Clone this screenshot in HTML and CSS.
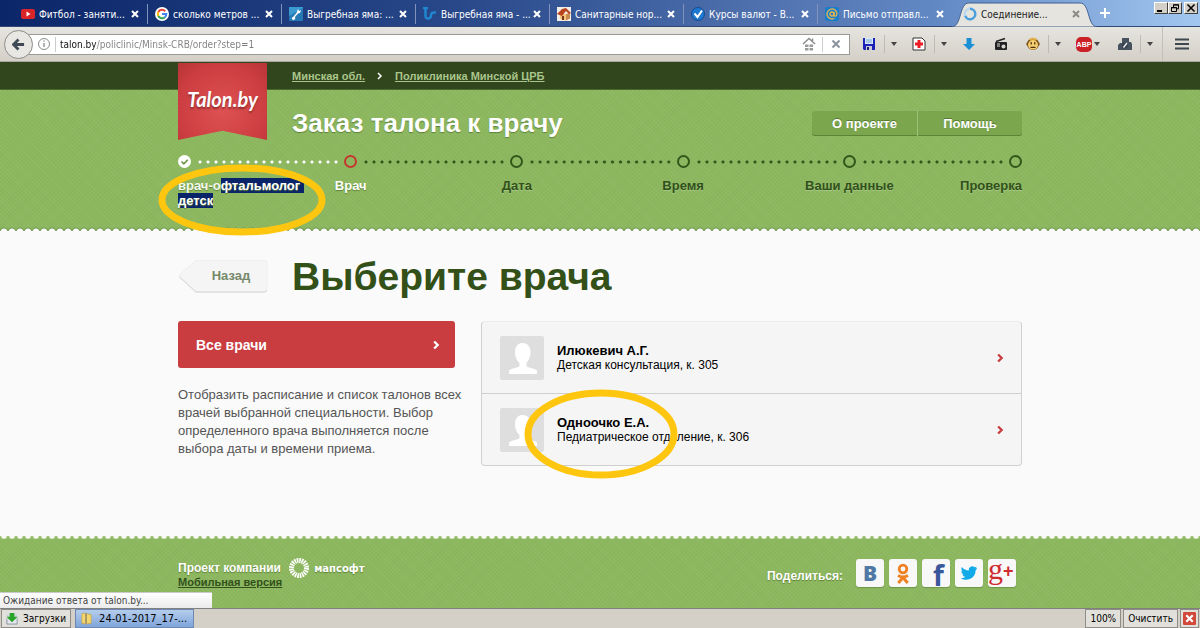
FILE: index.html
```html
<!DOCTYPE html>
<html lang="ru">
<head>
<meta charset="utf-8">
<meta name="viewport" content="width=device-width, initial-scale=1">
<title>Заказ талона к врачу</title>
<link rel="stylesheet" href="styles.css">
</head>
<body>
<div class="browser">
  <nav class="tabs" aria-label="Вкладки">
    <div class="tab">
      <svg class="fav" viewBox="0 0 14 14"><rect x="0" y="2" width="14" height="10" rx="2" fill="#d9252a"/><path d="M5.500 4.500l4 2.500-4 2.500z" fill="#fff"/></svg>
      <span class="tab-name">Фитбол - заняти...</span><button class="tab-close" aria-label="Закрыть"><svg viewBox="0 0 8 8"><path d="M1 1l6 6M7 1L1 7"/></svg></button>
    </div>
    <div class="tab">
      <svg class="fav" viewBox="0 0 14 14"><circle cx="7" cy="7" r="7" fill="#fff"/><g fill="none" stroke-width="2"><path d="M10.200 4.200A4.300 4.300 0 0 0 3.300 5" stroke="#ea4335"/><path d="M3.300 5a4.300 4.300 0 0 0 0 4" stroke="#fbbc05"/><path d="M3.300 9a4.300 4.300 0 0 0 6.400 1.400" stroke="#34a853"/><path d="M9.700 10.400A4.300 4.300 0 0 0 11.300 7H7" stroke="#4285f4"/></g></svg>
      <span class="tab-name">сколько метров ...</span><button class="tab-close" aria-label="Закрыть"><svg viewBox="0 0 8 8"><path d="M1 1l6 6M7 1L1 7"/></svg></button>
    </div>
    <div class="tab">
      <svg class="fav" viewBox="0 0 14 14"><rect width="14" height="14" rx="1" fill="#2479b5"/><path d="M0 9L14 1v-1H0z" fill="#3a9ad0"/><path d="M9 2l1 2 2-1-1 3-2 .5-3 3.500.3 2-2.300 1.200L2.500 11 4 10l3.500-4z" fill="#fff"/></svg>
      <span class="tab-name">Выгребная яма: ...</span><button class="tab-close" aria-label="Закрыть"><svg viewBox="0 0 8 8"><path d="M1 1l6 6M7 1L1 7"/></svg></button>
    </div>
    <div class="tab">
      <svg class="fav" viewBox="0 0 14 14"><path d="M0 1h5M2.500 1v8q0 3 3 2.500T8 8q0-3 5-2.500" fill="none" stroke="#1f86cf" stroke-width="2.500"/></svg>
      <span class="tab-name">Выгребная яма - ...</span><button class="tab-close" aria-label="Закрыть"><svg viewBox="0 0 8 8"><path d="M1 1l6 6M7 1L1 7"/></svg></button>
    </div>
    <div class="tab">
      <svg class="fav" viewBox="0 0 14 14"><rect width="14" height="14" fill="#f4efe6"/><path d="M3 7v5l6 1.500V7z" fill="#f4c67c"/><path d="M9 7v6.500l4-2V6z" fill="#c98a4d"/><path d="M0 7l5-5 4-1 5 5-2 1-3-3-4 5z" fill="#b8451f"/><path d="M5 9h2v4H5z" fill="#7a3218"/></svg>
      <span class="tab-name">Санитарные нор...</span><button class="tab-close" aria-label="Закрыть"><svg viewBox="0 0 8 8"><path d="M1 1l6 6M7 1L1 7"/></svg></button>
    </div>
    <div class="tab">
      <svg class="fav" viewBox="0 0 14 14"><circle cx="7" cy="7" r="6.500" fill="#1f78cf" stroke="#124d92"/><path d="M3.500 6.500L6.500 10 11 3.500" fill="none" stroke="#fff" stroke-width="2"/></svg>
      <span class="tab-name">Курсы валют - В...</span><button class="tab-close" aria-label="Закрыть"><svg viewBox="0 0 8 8"><path d="M1 1l6 6M7 1L1 7"/></svg></button>
    </div>
    <div class="tab tab-last">
      <svg class="fav" viewBox="0 0 14 14"><rect width="14" height="14" rx="2" fill="#1b7ecb"/><circle cx="7" cy="7" r="2" fill="none" stroke="#e8b64a" stroke-width="1.300"/><path d="M9 5v3q0 1.300 1.300 1.200T12 7a5 5 0 1 0-2.500 4.300" fill="none" stroke="#e8b64a" stroke-width="1.300"/></svg>
      <span class="tab-name">Письмо отправл...</span><button class="tab-close" aria-label="Закрыть"><svg viewBox="0 0 8 8"><path d="M1 1l6 6M7 1L1 7"/></svg></button>
    </div>
    <div class="tab tab-active">
      <svg class="tab-shape" viewBox="0 0 146 26" preserveAspectRatio="none"><path d="M0 26C10 25 7 2 17 2H129C139 2 136 25 146 26z" fill="#e6e4df" stroke="#3f5f92" stroke-width="1"/></svg>
      <svg class="fav" viewBox="0 0 14 14"><circle cx="7" cy="7" r="5.200" fill="none" stroke="#b9d7ee" stroke-width="2.400"/><path d="M7 1.800a5.200 5.200 0 1 1-4.800 7" fill="none" stroke="#4d9fdc" stroke-width="2.400"/></svg>
      <span class="tab-name">Соединение...</span><button class="tab-close" aria-label="Закрыть"><svg viewBox="0 0 8 8"><path d="M1 1l6 6M7 1L1 7"/></svg></button>
    </div>
    <button class="tab-new" aria-label="Новая вкладка"><svg viewBox="0 0 10 10"><path d="M5 0v10M0 5h10" stroke="#fff" stroke-width="2"/></svg></button>
    <div class="window-buttons">
      <button aria-label="Свернуть"><svg viewBox="0 0 10 8"><path d="M1 7h5" stroke="#000" stroke-width="2"/></svg></button>
      <button aria-label="Развернуть"><svg viewBox="0 0 10 8"><path d="M3.500 3V.8h5v4H7M1.500 3.500h5v4h-5zM1 3.800h6M3 1h6" fill="none" stroke="#000"/></svg></button>
      <button class="window-close" aria-label="Закрыть окно"><svg viewBox="0 0 10 8"><path d="M1.500 .5l7 7M8.500 .5l-7 7" stroke="#000" stroke-width="1.500"/></svg></button>
    </div>
  </nav>

  <div class="toolbar">
    <button class="back" aria-label="Назад на страницу"><svg viewBox="0 0 14 14"><path d="M7 1.500L1.500 7 7 12.500M2 7h11" fill="none" stroke="#3f4a56" stroke-width="3"/></svg></button>
    <div class="address">
      <svg class="info" viewBox="0 0 14 14"><circle cx="7" cy="7" r="5.500" fill="none" stroke="#8a8a8a"/><path d="M7 6v4M7 3.500v1.300" stroke="#8a8a8a" stroke-width="1.300"/></svg>
      <input class="url" type="text" aria-label="Адрес" value="talon.by/policlinic/Minsk-CRB/order?step=1">
      <button class="in-field" aria-label="Домой"><svg viewBox="0 0 14 14"><path d="M1 7l6-5.500L13 7M10.500 4V1.500" fill="none" stroke="#8d8d8d" stroke-width="1.500"/><path d="M3 7.500h3.500V10H3zM7.500 7.500H11V10H7.500zM3 11h3.500v2.500H3zM7.500 11H11v2.500H7.500z" fill="#9a9a9a"/></svg></button>
      <button class="in-field stop" aria-label="Остановить"><svg viewBox="0 0 14 14"><path d="M3.500 3.500l7 7M10.500 3.500l-7 7" stroke="#8a939c" stroke-width="2"/></svg></button>
    </div>
    <div class="tools">
      <div class="tool-group"><button class="tool" aria-label="Сохранить"><svg viewBox="0 0 14 14"><path d="M1 1h12v12H2l-1-1z" fill="#1a22b8"/><path d="M3 1h8v6H3z" fill="#d5e9fb"/><path d="M4 3h6M4 5h6" stroke="#7aa2cf"/><path d="M4 9h6v4H4z" fill="#c9ccd8"/><path d="M5 10h2v3H5z" fill="#1a1f70"/></svg></button><button class="caret" aria-label="Ещё"></button></div>
      <div class="tool-group"><button class="tool" aria-label="Добавить"><svg viewBox="0 0 14 14"><path d="M1 1h9l3 3v9H1z" fill="#fff" stroke="#333"/><path d="M7 3v8M3 7h8" stroke="#ec1c24" stroke-width="3"/></svg></button><button class="caret" aria-label="Ещё"></button></div>
      <button class="tool" aria-label="Загрузки"><svg viewBox="0 0 14 14"><path d="M4.500 1h5v6H13l-6 6-6-6h3.500z" fill="#1b8fd6"/></svg></button>
      <button class="tool" aria-label="Радио"><svg viewBox="0 0 14 14"><path d="M2 4.500L11 1.500" stroke="#222" stroke-width="1.500"/><rect x="1" y="5" width="12" height="8" rx="1" fill="#222"/><circle cx="9.500" cy="9.500" r="2" fill="#d8d6d0"/><path d="M3 7h3M3 9h3" stroke="#d8d6d0"/></svg></button>
      <div class="tool-group"><button class="tool" aria-label="Профиль"><svg viewBox="0 0 14 14"><circle cx="2" cy="7" r="1.800" fill="#8a5a20"/><circle cx="12" cy="7" r="1.800" fill="#8a5a20"/><circle cx="7" cy="7" r="6" fill="#7a4d18"/><ellipse cx="7" cy="7.800" rx="5" ry="4.800" fill="#f6cf70"/><path d="M3.500 3q3.500-2.500 7 0" stroke="#e4b04c" stroke-width="2" fill="none"/><path d="M5.200 5v2.500M8.800 5v2.500M4.500 10.300h5" stroke="#4d2c0d" stroke-width="1.200"/></svg></button><button class="caret" aria-label="Ещё"></button></div>
      <button class="abp" aria-label="ABP"><span class="abp-sign">ABP</span></button>
      <div class="tool-group"><button class="tool" aria-label="Снимок"><svg viewBox="0 0 14 14"><path d="M4 1h7v4h2l1 2v6H0V8l2-2h2z" fill="#46525e"/><circle cx="7" cy="8.500" r="3" fill="#36414b"/><path d="M5.500 10.500L9 6" stroke="#e8ecef" stroke-width="1.500"/></svg></button><button class="caret" aria-label="Ещё"></button></div>
      <button class="menu" aria-label="Меню"><svg viewBox="0 0 14 12"><path d="M0 1.500h14M0 6h14M0 10.500h14" stroke="#3f474f" stroke-width="2"/></svg></button>
    </div>
  </div>
</div>

<div class="site">
  <header class="site-header">
    <div class="wrap">
      <div class="head-grid">
        <a class="logo" href="#">Talon.by</a>
        <nav class="crumbs" aria-label="Путь"><a href="#">Минская обл.</a><svg viewBox="0 0 6 8"><path d="M1 1l3 3-3 3" fill="none" stroke="#fff" stroke-width="1.500"/></svg><a href="#">Поликлиника Минской ЦРБ</a></nav>
        <div class="head-row">
          <p class="site-title">Заказ талона к врачу</p>
          <div class="head-buttons"><button>О проекте</button><button>Помощь</button></div>
        </div>
      </div>
      <ol class="steps">
        <li class="step done">
          <div class="track"><svg class="dot-mark" viewBox="0 0 13 13"><circle cx="6.500" cy="6.500" r="6.500" fill="#fff"/><path d="M3.500 6.500l2.300 2.300 4-4" fill="none" stroke="#6c9442" stroke-width="1.600"/></svg><span class="dots"></span></div>
          <div class="label">врач-о<mark>фтальмолог </mark><br><mark>детск</mark></div>
          <svg class="ring ring-step" viewBox="0 0 168 72"><ellipse cx="84" cy="36" rx="80" ry="32"/></svg>
        </li>
        <li class="step current"><div class="track"><span class="circle"></span><span class="dots"></span></div><div class="label">Врач</div></li>
        <li class="step"><div class="track"><span class="circle"></span><span class="dots"></span></div><div class="label">Дата</div></li>
        <li class="step"><div class="track"><span class="circle"></span><span class="dots"></span></div><div class="label">Время</div></li>
        <li class="step"><div class="track"><span class="circle"></span><span class="dots"></span></div><div class="label">Ваши данные</div></li>
        <li class="step last"><div class="track"><span class="circle"></span></div><div class="label">Проверка</div></li>
      </ol>
    </div>
  </header>

  <main class="wrap main">
    <div class="page-title">
      <button class="prev"><svg viewBox="0 0 90 34" preserveAspectRatio="none"><path d="M18 1.500H86q3 0 3 3v25q0 3-3 3H18L2 18q-1.500-1.500 0-3z" fill="#cbcbcb"/><path d="M18 .5H86q3 0 3 3v25q0 3-3 3H18L2 17q-1.500-1.500 0-3z" fill="#f5f5f5" stroke="#e6e6e6" stroke-width=".5"/></svg><span>Назад</span></button>
      <h1>Выберите врача</h1>
    </div>
    <div class="columns">
      <aside>
        <a class="all" href="#">Все врачи<svg viewBox="0 0 6 8"><path d="M1 1l3 3-3 3" fill="none" stroke="#fff" stroke-width="2"/></svg></a>
        <p class="hint">Отобразить расписание и список талонов всех врачей выбранной специальности. Выбор определенного врача выполняется после выбора даты и времени приема.</p>
      </aside>
      <ul class="doctors">
        <li><a href="#">
          <svg class="avatar" viewBox="0 0 44 44"><rect width="44" height="44" rx="2" fill="#dedede"/><path d="M22.500 7c5.500 0 8 4 8 9 0 6-2.500 9-4 11v3c1 2 10 2.500 10.500 5v3H9v-3c.5-2.500 9.500-3 10.500-5v-3c-2-2-4.500-5-4.500-11 0-5 2.500-9 7.500-9z" fill="#fff"/></svg>
          <span class="who"><b>Илюкевич А.Г.</b><span>Детская консультация, к. 305</span></span>
          <svg class="go" viewBox="0 0 6 8"><path d="M1 1l3 3-3 3" fill="none" stroke="#c93c40" stroke-width="2"/></svg></a></li>
        <li><a href="#">
          <svg class="avatar" viewBox="0 0 44 44"><rect width="44" height="44" rx="2" fill="#dedede"/><path d="M22.500 7c5.500 0 8 4 8 9 0 6-2.500 9-4 11v3c1 2 10 2.500 10.500 5v3H9v-3c.5-2.500 9.500-3 10.500-5v-3c-2-2-4.500-5-4.500-11 0-5 2.500-9 7.500-9z" fill="#fff"/></svg>
          <span class="who"><b>Одноочко Е.А.</b><span>Педиатрическое отделение, к. 306</span></span>
          <svg class="go" viewBox="0 0 6 8"><path d="M1 1l3 3-3 3" fill="none" stroke="#c93c40" stroke-width="2"/></svg></a>
          <svg class="ring ring-doctor" viewBox="0 0 154 90"><ellipse cx="77" cy="45" rx="73" ry="41"/></svg></li>
      </ul>
    </div>
  </main>

  <footer class="site-footer">
    <div class="wrap foot">
      <div class="company">
        <div><p>Проект компании</p><a href="#">Мобильная версия</a></div>
        <div class="mapsoft"><svg viewBox="0 0 22 22"><circle cx="11" cy="11" r="7.500" fill="none" stroke="#fff" stroke-width="5" stroke-dasharray="1.600 .756"/></svg><span>мапсофт</span></div>
      </div>
      <div class="share">
        <span class="share-label">Поделиться:</span>
        <a class="vk" href="#" aria-label="ВКонтакте">B</a>
        <a href="#" aria-label="Одноклассники"><svg viewBox="0 0 28 28" fill="none" stroke="#ef8122"><circle cx="14" cy="10" r="3.800" stroke-width="2.800"/><path d="M9 16.500q5 2.800 10 0M14 18.500L9.300 24M14 18.500l4.700 5.500" stroke-width="3"/></svg></a>
        <a class="fb" href="#" aria-label="Facebook">f</a>
        <a href="#" aria-label="Twitter"><svg viewBox="1 1 27 27"><path d="M22.500 9.500c-.6.300-1.200.5-1.900.5.700-.4 1.200-1 1.400-1.800-.6.400-1.300.6-2.100.8a3.300 3.300 0 0 0-5.600 3c-2.700-.1-5.100-1.400-6.700-3.400-.9 1.500-.4 3.400 1 4.400-.5 0-1-.2-1.500-.4 0 1.600 1.100 2.900 2.600 3.200-.5.100-1 .1-1.500.1.400 1.300 1.600 2.200 3.100 2.300-1.400 1.100-3.100 1.500-4.800 1.300 6.300 3.900 14.300.1 14.400-7.600.6-.6 1.200-1.400 1.600-2.400z" fill="#10aae9"/></svg></a>
        <a class="gp" href="#" aria-label="Google+">g<span>+</span></a>
      </div>
    </div>
    <div class="status">Ожидание ответа от talon.by...</div>
  </footer>
</div>

<div class="downloads">
  <button class="dl"><svg viewBox="0 0 14 14"><path d="M1 7h11v6H1z" fill="#e4e8ee" stroke="#8791a0"/><path d="M1 2h11v6H1z" fill="#cfd6df"/><path d="M4 1h5v4h3.500L6.500 11 .5 5H4z" fill="#28a428"/></svg>Загрузки</button>
  <button class="dl file"><svg viewBox="0 0 14 14"><path d="M2 2l4-1v12l-4-1zM7 2l5 1v9l-5 1z" fill="#f4d66f" stroke="#c39a2c" stroke-width=".6"/><path d="M6.500 1v12" stroke="#777" stroke-width="1.500" stroke-dasharray="1 1"/></svg>24-01-2017_17-...</button>
  <span class="dl-space"></span>
  <button class="dl">100%</button>
  <button class="dl">Очистить</button>
  <button class="dl dl-close" aria-label="Закрыть панель"><svg viewBox="0 0 12 12"><rect width="12" height="12" rx="1" fill="#d2483a"/><path d="M3 3l6 6M9 3L3 9" stroke="#fff" stroke-width="2"/></svg></button>
</div>
</body>
</html>
```

FILE: styles.css
```css
* { box-sizing: border-box; }
body {
  margin: 0;
  min-height: 100vh;
  display: flex;
  flex-direction: column;
  background: #fafafa;
  font-family: "Liberation Sans", Arial, sans-serif;
}
button { margin: 0; padding: 0; border: 0; background: none; font: inherit; color: inherit; }
svg { display: block; flex: none; }
p, h1, ol, ul { margin: 0; padding: 0; list-style: none; }

/* Browser window */
.browser, .downloads, .status { font-family: "DejaVu Sans Condensed", "DejaVu Sans", sans-serif; font-size: 10px; }
.tabs {
  display: flex;
  height: 27px;
  padding-left: 14px;
  background: linear-gradient(90deg, #0b2669, #284889 38%, #5577b3 67%, #6288c4 78%, #a2c7f0);
  border-bottom: 1px solid #2f4875;
  color: #fff;
}
.tab {
  flex: 0 1 134px;
  display: flex;
  align-items: center;
  min-width: 0;
  margin: 4px 0 2px;
  padding: 0 8px 0 7px;
  border-right: 1px solid #8193ba;
}
.fav { width: 14px; height: 14px; }
.tab-name { flex: 1; margin-left: 4px; white-space: nowrap; }
.tab-close svg { width: 8px; height: 8px; fill: none; stroke: #fff; stroke-width: 2; }
.tab-last { border-right: 0; }
.tab-active { position: relative; flex-basis: 145px; margin: 1px 0 0; padding: 1px 17px 0 11px; border: 0; color: #222; }
.tab-active .fav, .tab-active .tab-name, .tab-active .tab-close { position: relative; }
.tab-active .tab-close svg { stroke: #8a8a88; }
.tab-shape { position: absolute; left: 0; top: 0; width: 100%; height: 26px; }
.tab-new { width: 16px; }
.tab-new svg { width: 10px; height: 10px; margin: 0 auto; }
.window-buttons { display: flex; align-items: flex-start; margin: 2px 2px 0 auto; }
.window-buttons button { width: 14px; height: 12px; background: #d4d0c8; border: 1px solid; border-color: #fff #404040 #404040 #fff; }
.window-buttons svg { width: 10px; height: 8px; margin: 0 auto; }
.window-buttons .window-close { margin-left: 2px; }

.toolbar {
  display: flex;
  align-items: center;
  height: 35px;
  padding-left: 4px;
  background: linear-gradient(#e6e4df, #d4d0c8);
  border-bottom: 1px solid #a8a8a0;
}
.back { z-index: 1; width: 29px; height: 29px; border: 1px solid #8b8b87; border-radius: 50%; background: #e9e7e3; }
.back svg { width: 13px; height: 13px; margin: 0 auto; }
.address {
  flex: 1;
  display: flex;
  align-items: center;
  height: 21px;
  margin-left: -8px;
  padding-left: 11px;
  background: #fff;
  border: 1px solid #9a9a96;
}
.info { width: 14px; height: 14px; }
.url {
  flex: 1;
  min-width: 0;
  height: 15px;
  margin-left: 4px;
  padding: 0 0 0 4px;
  border: 0;
  border-left: 1px solid #ccc;
  outline: 0;
  font: inherit;
  color: transparent;
  background: linear-gradient(90deg, #111 41px, #808080 41px);
  -webkit-background-clip: text;
  background-clip: text;
}
.in-field { width: 27px; height: 15px; }
.in-field svg { width: 14px; height: 14px; margin: 0 auto; }
.stop { border-left: 1px solid #ccc; }
.tools { display: flex; align-items: center; gap: 2px; margin-left: 4px; }
.tool-group { display: flex; align-items: center; }
.tool { width: 30px; height: 20px; }
.tool svg { width: 14px; height: 14px; margin: 0 auto; }
.caret { width: 18px; height: 18px; border-left: 1px solid #bdbab3; }
.caret::after, .abp::after { content: ""; display: block; width: 0; margin: 0 auto; border: 3px solid transparent; border-top: 4px solid #444; border-bottom: 0; }
.abp { display: flex; align-items: center; gap: 2px; width: 40px; padding-left: 8px; }
.abp::after { margin: 0; }
.abp-sign { width: 16px; height: 15px; border-radius: 5px; background: #cc2027; color: #fff; font: bold 7px/15px "Liberation Sans", sans-serif; text-align: center; }
.menu { width: 38px; height: 34px; margin-left: 2px; border-left: 1px solid #c2bfb8; }
.menu svg { width: 14px; height: 12px; margin: 0 auto; }

/* Site */
.site { flex: 1; display: flex; flex-direction: column; }
.wrap { width: 100%; max-width: 844px; margin: 0 auto; }
.site-header, .site-footer {
  background-color: #8cb75f;
  background-image:
    repeating-linear-gradient(45deg, rgba(255,255,255,.04) 0 1px, transparent 1px 3px),
    repeating-linear-gradient(-45deg, rgba(60,100,20,.03) 0 1px, transparent 1px 3px);
}
.site-header::before { content: ""; display: block; height: 27px; margin-bottom: -27px; background: #32461d; border-bottom: 1px solid #486a2a; }
.site-header::after {
  content: "";
  display: block;
  height: 4px;
  margin-top: 19px;
  background: radial-gradient(circle at 4px 5px, #fafafa 3px, #6f9549 4px, transparent 5px) 0 0 / 8px 4px;
}
.head-grid { position: relative; display: grid; grid-template-columns: 114px 1fr; grid-template-rows: 26px 66px; }
.logo {
  grid-row: 1 / 3;
  width: 89px;
  height: 77px;
  background: radial-gradient(circle at 50% 60%, #df5253, #cb3d40 70%, #b73437);
  clip-path: polygon(0 0, 100% 0, 100% 100%, 50% 88%, 0 100%);
  color: #fff;
  font: italic bold 20px/72px "Lato", sans-serif;
  text-align: center;
  text-decoration: none;
  text-shadow: 0 2px 2px #8f2c2d;
}
.crumbs { display: flex; align-items: center; gap: 12px; font-size: 11px; font-weight: bold; }
.crumbs a { color: #a9c58b; }
.crumbs svg { width: 6px; height: 8px; }
.head-row { display: flex; align-items: center; justify-content: space-between; padding-top: 2px; }
.site-title { color: #fff; font-size: 26px; font-weight: bold; text-shadow: 0 1px 1px #5d8236; }
.head-buttons { display: flex; border-radius: 3px; background: #7ba64e; box-shadow: inset 0 -1px #5c8435, inset 0 1px #8eb665; }
.head-buttons button { width: 105px; height: 26px; color: #fff; font-size: 13px; font-weight: bold; text-shadow: 0 -1px #557a31; }
.head-buttons button + button { border-left: 1px solid #9cc377; }
.steps { display: flex; color: #32501b; font-size: 13px; font-weight: bold; line-height: 15px; }
.step { position: relative; flex: 1; min-width: 0; }
.step.last { flex: none; width: 13px; }
.track { display: flex; align-items: center; }
.dot-mark { width: 13px; height: 13px; }
.circle { flex: none; width: 13px; height: 13px; border: 2px solid #32571a; border-radius: 50%; }
.current .circle { border-color: #c5362f; }
.dots { flex: 1; height: 4px; margin: 0 4px 0 5px; background: radial-gradient(circle at 4px 2px, #32571a 1px, transparent 2px) 0 0 / 8px 4px round; }
.done .dots { background: radial-gradient(circle at 4px 2px, #fff 1px, transparent 2px) 0 0 / 8px 4px round; }
.label { display: flex; justify-content: center; width: 13px; margin-top: 10px; white-space: nowrap; text-shadow: 0 1px #a5c983; }
.done .label { display: block; width: auto; color: #f5f9ee; text-shadow: 0 1px 1px #5d8236; }
.current .label { color: #fff; text-shadow: 0 1px 1px #5d8236; }
.last .label { justify-content: flex-end; }
mark { background: #0a246a; color: #fff; white-space: pre; }
.ring { position: absolute; z-index: 2; fill: none; stroke: #ffc60f; stroke-width: 7; pointer-events: none; }
.ring-step { left: -20px; top: 9px; width: 168px; height: 72px; }

.main { flex: 1; padding: 23px 0 20px; }
.page-title { display: grid; grid-template-columns: 114px 1fr; align-items: center; }
.prev { display: grid; align-items: center; width: 90px; height: 34px; color: #75896a; font-size: 13px; font-weight: bold; }
.prev svg, .prev span { grid-area: 1 / 1; }
.prev svg { width: 90px; height: 34px; }
.prev span { z-index: 1; padding: 0 0 3px 16px; }
h1 { color: #325018; font-size: 39px; line-height: 46px; }
.columns { display: grid; grid-template-columns: 277fr 541fr; gap: 26px; align-items: start; margin-top: 21px; }
.all { display: flex; align-items: center; justify-content: space-between; height: 47px; padding: 0 15px 0 18px; border-radius: 3px; background: #c93c40; color: #fff; font-size: 14px; font-weight: bold; text-decoration: none; }
.all svg, .go { width: 7px; height: 10px; }
.hint { margin: 18px -12px 0 0; color: #555; font-size: 13px; line-height: 18px; }
.doctors { border: 1px solid #d0d0d0; border-top-color: #ededed; border-radius: 4px; background: #f5f5f5; }
.doctors li { position: relative; }
.doctors li + li { border-top: 1px solid #cfcfcf; }
.doctors a { display: flex; align-items: center; height: 71px; padding: 0 17px 0 18px; color: #000; font-size: 12px; line-height: 15px; text-decoration: none; }
.avatar { width: 44px; height: 44px; }
.who { flex: 1; display: flex; flex-direction: column; margin-left: 13px; }
.who b { font-size: 13px; }
.ring-doctor { left: 42px; top: -5px; width: 154px; height: 90px; }

.site-footer { position: relative; }
.site-footer::before {
  content: "";
  display: block;
  height: 3px;
  background: radial-gradient(circle at 4px 0, #fafafa 2px, #b5d296 3px, transparent 4px) 0 0 / 8px 3px;
}
.foot { display: flex; justify-content: space-between; min-height: 69px; padding: 20px 6px 0 0; color: #fff; font-size: 12px; font-weight: bold; }
.company { display: flex; gap: 6px; line-height: 14px; text-shadow: 0 1px 1px #5d8236; }
.company > div:first-child { padding-top: 2px; }
.company a { display: block; color: #32501b; font-size: 11px; text-shadow: none; }
.mapsoft { display: flex; align-items: center; gap: 4px; height: 18px; font: bold 10px "DejaVu Sans", sans-serif; }
.mapsoft svg { width: 22px; height: 22px; }
.share { display: flex; gap: 5px; }
.share-label { margin: 10px 8px 0 0; text-shadow: 0 1px 1px #5d8236; }
.share a { display: block; width: 28px; height: 28px; border-radius: 3px; background: #f8f8f8; box-shadow: 0 1px 1px #6f9549; text-align: center; text-decoration: none; }
.share .vk { color: #5078a5; font: 800 21px/29px "Open Sans", sans-serif; }
.share .fb { padding-left: 5px; color: #39579a; font: bold 28px/32px "Open Sans", sans-serif; }
.share .gp { display: flex; color: #cf2c30; font: 30px/20px "Liberation Serif", serif; }
.share .gp span { font: bold 18px/24px "Liberation Sans", sans-serif; }
.status { position: absolute; left: 0; bottom: 0; width: 212px; height: 16px; padding-left: 3px; border-top: 1px solid #c9c9c9; background: linear-gradient(#fff, #ebebeb); color: #444; line-height: 16px; white-space: nowrap; }

/* Downloads strip */
.downloads { display: flex; align-items: stretch; gap: 2px; height: 20px; padding: 0 1px; background: #d4d0c8; border-top: 1px solid #808080; }
.dl { display: flex; align-items: center; gap: 4px; padding: 0 4px; border: 1px solid #8f8c86; background: #e2e0db; color: #000; white-space: nowrap; }
.dl svg { width: 13px; height: 13px; }
.dl-close { padding: 0 2px; }
.file { margin-left: 2px; width: 119px; background: linear-gradient(#b5cdec, #7fa5da); border-color: #6d89b3; font-size: 11px; gap: 6px; }
.dl-space { flex: 1; }
```
